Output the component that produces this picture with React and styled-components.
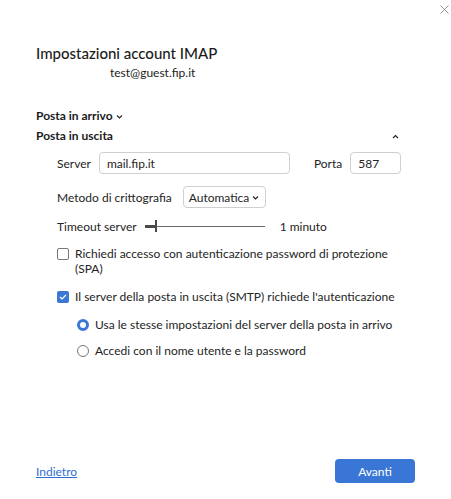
import React from "react";
import styled, { createGlobalStyle } from "styled-components";

const Global = createGlobalStyle`
  html, body { margin: 0; padding: 0; background: #fff; }
  body { font-family: Lato, "Noto Sans", sans-serif; color: #1f1f1f; }
`;

const Page = styled.div`
  position: relative;
  width: 451px;
  height: 499px;
  box-sizing: border-box;
  padding: 42px 36px 0 36px;
  display: flex;
  flex-direction: column;
`;

const Close = styled.button`
  position: absolute;
  top: 3px;
  right: 1px;
  width: 12px;
  height: 12px;
  padding: 0;
  border: none;
  background: none;
  display: flex;
  align-items: center;
  justify-content: center;
`;

const Title = styled.h1`
  margin: 0;
  font-size: 15px;
  font-weight: 500;
  line-height: 22px;
  color: #1b1b1b;
`;

const Email = styled.div`
  margin: 0 0 0 74px;
  font-size: 12px;
  line-height: 18px;
  color: #222;
`;

const Section = styled.div`
  display: flex;
  align-items: center;
  font-size: 12px;
  font-weight: 700;
  line-height: 20px;
  color: #1b1b1b;
  margin-top: ${(p) => p.$mt || 0}px;
  justify-content: ${(p) => (p.$spread ? "space-between" : "flex-start")};
  padding-right: ${(p) => (p.$spread ? 16 : 0)}px;
`;

const Body = styled.div`
  padding-left: 21px;
  display: flex;
  flex-direction: column;
`;

const Row = styled.div`
  display: flex;
  align-items: center;
  font-size: 12px;
  color: #242424;
  height: ${(p) => p.$h || 22}px;
  margin-top: ${(p) => p.$mt || 0}px;
`;

const Label = styled.span`
  margin-right: ${(p) => p.$mr || 8}px;
  white-space: nowrap;
`;

const Field = styled.div`
  box-sizing: border-box;
  height: 22px;
  width: ${(p) => p.$w}px;
  border: 1px solid #cfcfcf;
  border-radius: 4px;
  padding: 0 7px;
  display: flex;
  align-items: center;
  font-size: 12px;
  color: #242424;
  margin-right: ${(p) => p.$mr || 0}px;
`;

const Select = styled(Field)`
  justify-content: space-between;
  padding: 0 7px 0 5px;
  font-size: 12px;
`;

const Slider = styled.div`
  position: relative;
  width: 120px;
  height: 12px;
  margin: 0 15px 0 0;
  display: flex;
  align-items: center;
`;

const Track = styled.div`
  flex: 1;
  height: 1px;
  background: #6b6b6b;
`;

const TrackFill = styled.div`
  position: absolute;
  left: 0;
  top: 5px;
  width: 12px;
  height: 3px;
  background: #4a4a4a;
`;

const Thumb = styled.div`
  position: absolute;
  left: 10px;
  top: 0;
  width: 2px;
  height: 12px;
  background: #4a4a4a;
`;

const Check = styled.div`
  box-sizing: border-box;
  width: 12px;
  height: 12px;
  flex: none;
  border-radius: 2px;
  border: ${(p) => (p.$on ? "none" : "1px solid #777")};
  background: ${(p) => (p.$on ? "#3b78d6" : "#fff")};
  display: flex;
  align-items: center;
  justify-content: center;
  margin-right: 6px;
`;

const CheckRow = styled.div`
  display: flex;
  align-items: flex-start;
  font-size: 12px;
  line-height: 15px;
  color: #242424;
  margin-top: ${(p) => p.$mt || 0}px;
  padding-left: ${(p) => p.$indent || 0}px;
`;

const BoxWrap = styled.div`
  height: 15px;
  display: flex;
  align-items: center;
`;

const Radio = styled.div`
  box-sizing: border-box;
  width: 12px;
  height: 12px;
  flex: none;
  border-radius: 50%;
  border: ${(p) => (p.$on ? "3px solid #3b78d6" : "1px solid #777")};
  margin-right: 6px;
`;

const Spacer = styled.div`
  flex: 1;
`;

const Footer = styled.div`
  display: flex;
  align-items: center;
  justify-content: space-between;
  height: 24px;
  margin-bottom: 16px;
`;

const Link = styled.a`
  font-size: 12px;
  color: #2f6fd1;
  text-decoration: underline;
  cursor: pointer;
`;

const Primary = styled.button`
  width: 80px;
  height: 24px;
  border: none;
  border-radius: 4px;
  background: #3a76d6;
  color: #fff;
  font-family: inherit;
  font-size: 12px;
  padding: 0;
`;

const Chev = ({ up }) => (
  <svg width="7" height="5" viewBox="0 0 7 5" style={{ marginLeft: 3, flex: "none" }}>
    <path
      d={up ? "M1 4 L3.5 1.5 L6 4" : "M1 1.5 L3.5 4 L6 1.5"}
      fill="none"
      stroke="#222"
      strokeWidth="1.1"
    />
  </svg>
);

export default function App() {
  return (
    <>
      <Global />
      <Page>
        <Close aria-label="Chiudi">
          <svg width="9" height="9" viewBox="0 0 9 9">
            <path d="M0.5 0.5 L8.5 8.5 M8.5 0.5 L0.5 8.5" stroke="#8a8a8a" strokeWidth="0.9" />
          </svg>
        </Close>
        <Title>Impostazioni account IMAP</Title>
        <Email>test@guest.fip.it</Email>
        <Section $mt={24}>
          Posta in arrivo
          <Chev />
        </Section>
        <Section $spread>
          Posta in uscita
          <Chev up />
        </Section>
        <Body>
          <Row $mt={6}>
            <Label>Server</Label>
            <Field $w={191} $mr={24}>mail.fip.it</Field>
            <Label>Porta</Label>
            <Field $w={51}>587</Field>
          </Row>
          <Row $mt={12}>
            <Label $mr={11}>Metodo di crittografia</Label>
            <Select $w={83}>
              Automatica
              <Chev />
            </Select>
          </Row>
          <Row $mt={7} $h={22}>
            <Label $mr={8}>Timeout server</Label>
            <Slider>
              <Track />
              <TrackFill />
              <Thumb />
            </Slider>
            <span>1 minuto</span>
          </Row>
          <CheckRow $mt={9}>
            <BoxWrap>
              <Check />
            </BoxWrap>
            <span>
              Richiedi accesso con autenticazione password di protezione
              <br />
              (SPA)
            </span>
          </CheckRow>
          <CheckRow $mt={13}>
            <BoxWrap>
              <Check $on>
                <svg width="8" height="6" viewBox="0 0 8 6">
                  <path d="M1 3 L3 5 L7 1" fill="none" stroke="#fff" strokeWidth="1.2" />
                </svg>
              </Check>
            </BoxWrap>
            <span>Il server della posta in uscita (SMTP) richiede l'autenticazione</span>
          </CheckRow>
          <CheckRow $mt={13} $indent={20}>
            <BoxWrap>
              <Radio $on />
            </BoxWrap>
            <span>Usa le stesse impostazioni del server della posta in arrivo</span>
          </CheckRow>
          <CheckRow $mt={11} $indent={20}>
            <BoxWrap>
              <Radio />
            </BoxWrap>
            <span>Accedi con il nome utente e la password</span>
          </CheckRow>
        </Body>
        <Spacer />
        <Footer>
          <Link>Indietro</Link>
          <Primary>Avanti</Primary>
        </Footer>
      </Page>
    </>
  );
}
